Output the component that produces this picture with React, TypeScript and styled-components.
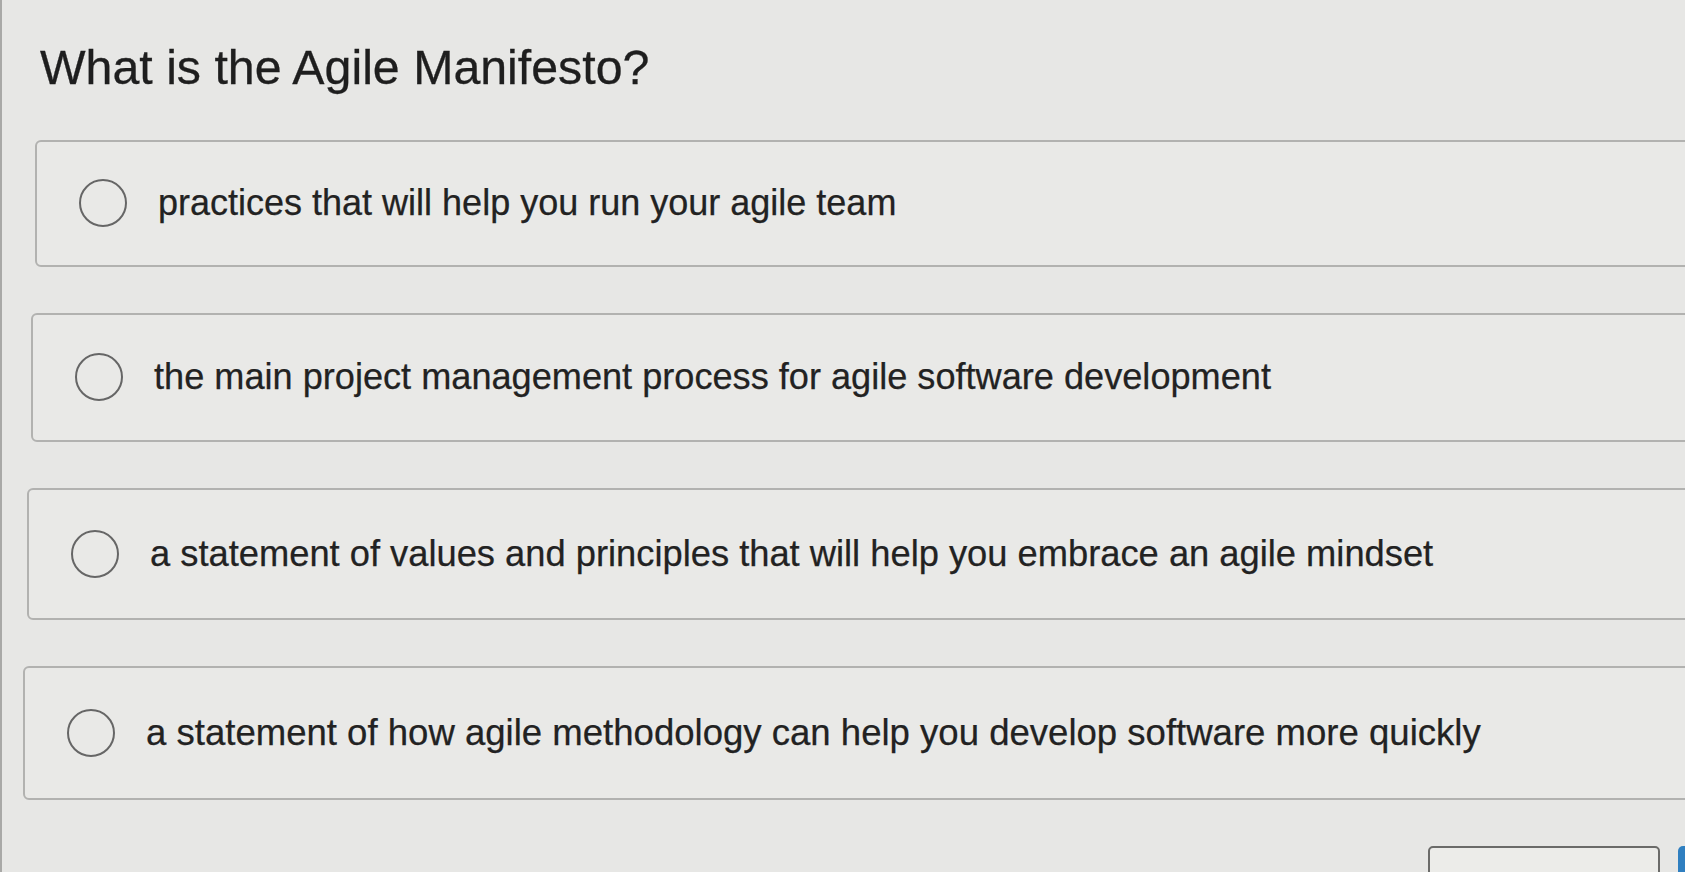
import React from "react";
import styled, { createGlobalStyle } from "styled-components";

const Global = createGlobalStyle`
  html, body { margin: 0; padding: 0; background: #e7e7e5; }
  body { font-family: "Liberation Sans", Arial, sans-serif; }
`;

const Page = styled.div`
  width: 1685px;
  height: 872px;
  overflow: hidden;
  box-sizing: border-box;
  border-left: 2px solid #a9a9a7;
  background: #e7e7e5;
  display: flex;
  flex-direction: column;
`;

const Title = styled.h1`
  margin: 39px 0 0 38px;
  font-size: 48.3px;
  line-height: 1.2;
  font-weight: 400;
  color: #1e1e1e;
  -webkit-text-stroke: 0.3px #1e1e1e;
`;

const Options = styled.div`
  margin-top: 43px;
  display: flex;
  flex-direction: column;
  gap: 46px;
`;

const Option = styled.label<{ $indent: number; $height: number }>`
  margin-left: ${(p) => p.$indent}px;
  margin-right: -20px;
  height: ${(p) => p.$height}px;
  box-sizing: border-box;
  border: 2px solid #b2b2b0;
  border-radius: 6px;
  background: #e9e9e7;
  display: flex;
  align-items: center;
  gap: 31px;
  padding-left: 42px;
`;

const Radio = styled.span`
  flex: none;
  width: 48px;
  height: 48px;
  box-sizing: border-box;
  border: 2.5px solid #666666;
  border-radius: 50%;
`;

const OptionText = styled.span<{ $size: number }>`
  font-size: ${(p) => p.$size}px;
  color: #222222;
  -webkit-text-stroke: 0.25px #222222;
`;

const Footer = styled.div`
  margin-top: 46px;
  display: flex;
  justify-content: flex-end;
  gap: 18px;
  margin-right: -40px;
`;

const GhostButton = styled.div`
  width: 232px;
  height: 48px;
  box-sizing: border-box;
  border: 2px solid #6b6b69;
  border-radius: 5px;
  background: #ecece9;
`;

const PrimaryButton = styled.div`
  width: 47px;
  height: 48px;
  border-radius: 5px;
  background: #2f7fc0;
`;

const options = [
  { text: "practices that will help you run your agile team", indent: 33, height: 127, size: 36 },
  { text: "the main project management process for agile software development", indent: 29, height: 129, size: 36.15 },
  { text: "a statement of values and principles that will help you embrace an agile mindset", indent: 25, height: 132, size: 36.3 },
  { text: "a statement of how agile methodology can help you develop software more quickly", indent: 21, height: 134, size: 36.55 },
];

export default function App() {
  return (
    <>
      <Global />
      <Page>
        <Title>What is the Agile Manifesto?</Title>
        <Options>
          {options.map((o) => (
            <Option key={o.text} $indent={o.indent} $height={o.height}>
              <Radio />
              <OptionText $size={o.size}>{o.text}</OptionText>
            </Option>
          ))}
        </Options>
        <Footer>
          <GhostButton />
          <PrimaryButton />
        </Footer>
      </Page>
    </>
  );
}
